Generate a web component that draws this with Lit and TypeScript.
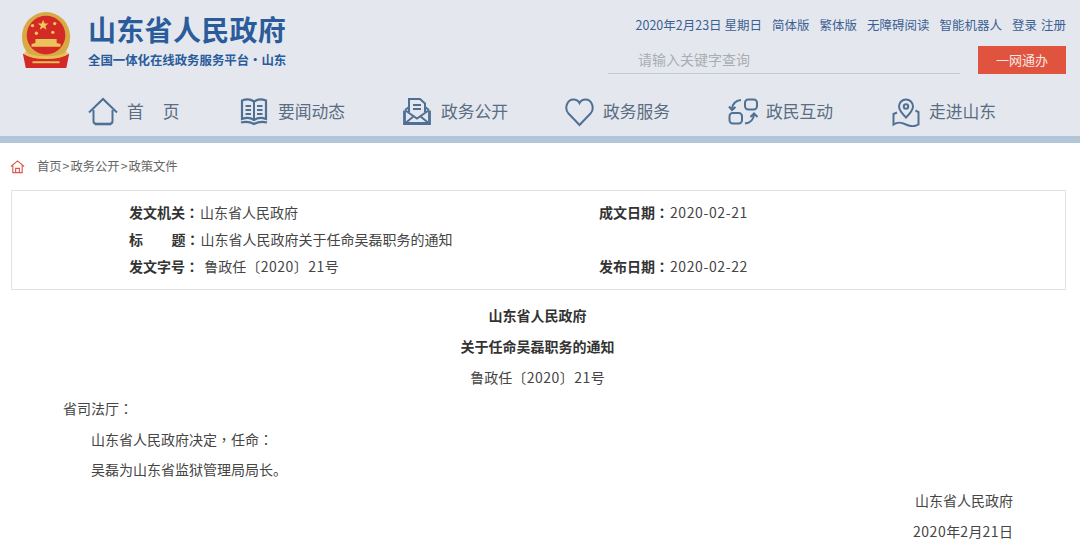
import { LitElement, html, css, svg } from "lit";
import { customElement } from "lit/decorators.js";

const icons: Record<string, unknown> = {
  home: svg`<path d="M1 15.500 15 2l14 13.500"/><path d="M5.500 13v11c0 2 1 3 3 3h13c2 0 3-1 3-3V13"/><path d="M7 27h16" stroke-width="2.600"/>`,
  book: svg`<path d="M2 3.500c4-1.500 8.500-1.500 12 1 3.500-2.500 8-2.500 12 -1v18.500c-4-1.500-8.500-1.500-12 1-3.500-2.500-8-2.500-12-1z" stroke-width="2.200"/><path d="M14 5v18M5.500 9H11M5.500 13H11M5.500 17H11M17 9h5.500M17 13h5.500M17 17h5.500"/><path d="M1 25.500c4.500-1.200 9-.8 13 1.500 4-2.300 8.500-2.700 13-1.500" stroke-width="2.200"/>`,
  mail: svg`<path d="M1.500 13.500v13h25v-13" stroke-width="2.800"/><path d="M2 13l4-3M26 13l-4-3M2.500 26l8.500-7M25.500 26 17 19M2.500 13.500 14 21.500l11.500-8"/><path d="M6 15V2h11l5 4.500V15"/><path d="M10 8h8M10 12h8"/>`,
  heart: svg`<path d="M14.500 28 3.500 16.500C-1 11.500 2 2.500 8.500 2.500c2.800 0 4.800 1.200 6 3.500 1.200-2.300 3.200-3.500 6-3.500C27 2.500 30 11.500 25.500 16.500z"/>`,
  swap: svg`<rect x="17" y="2.500" width="12" height="10" rx="3.200"/><rect x="1.500" y="16" width="12.500" height="10.500" rx="3.200"/><path d="M13 3c-5 .5-8.500 3.500-9 9M1 9.500l3 3.500 3.500-3"/><path d="M17 26.500c5-.5 8.500-3.500 9-9M22.500 20l3.500-3.500 3.500 3.500"/>`,
  map: svg`<path d="M15 20.500c-4.500-4.500-7-7.500-7-11a7 7 0 0 1 14 0c0 3.500-2.500 6.500-7 11z"/><circle cx="15" cy="9.500" r="2.200"/><path d="M6 15.500 2.500 17v10.500c4-2.800 7-2.800 12.500 0 5.500 2.500 8.500 2.500 12.500 0V15l-3-1.500"/>`,
};

const nav = [
  ["home", "首页"],
  ["book", "要闻动态"],
  ["mail", "政务公开"],
  ["heart", "政务服务"],
  ["swap", "政民互动"],
  ["map", "走进山东"],
];

const P = (s: string) => html`<span class="p">${s}</span>`;

@customElement("app-root")
export class AppRoot extends LitElement {
  static styles = css`
    :host { display: block; width: 1080px; height: 545px; overflow: hidden; background: #fff;
      font-family: "Noto Sans CJK SC", "Liberation Sans", sans-serif; color: #454545; font-size: 14px; }
    .p { font-family: "Noto Sans CJK TC", sans-serif; }
    .hdr { background: #e4e8ee; height: 136px; border-bottom: 7px solid #b2c5d9; }
    .top { display: flex; justify-content: space-between; height: 88px; }
    .brand { display: flex; padding: 12px 0 0 20px; gap: 14px; }
    .emblem { width: 54px; height: 57px; filter: blur(0.4px); }
    .title { font-size: 28px; letter-spacing: 0.300px; font-weight: 700; color: #2a5b9b; line-height: 32px; margin-top: 1px; }
    .sub { font-size: 12.400px; font-weight: 700; color: #2a5b9b; line-height: 16px; margin-top: 7px; white-space: nowrap; }
    .right { padding: 16px 14px 0 0; }
    .links { display: flex; justify-content: flex-end; gap: 10px; font-size: 12.500px; line-height: 17px; color: #3c5f94; white-space: nowrap; }
    .links .tight { margin-left: -6px; }
    .search { display: flex; justify-content: flex-end; gap: 18px; align-items: flex-start; margin-top: 13px; }
    .input { width: 352px; height: 28px; border-bottom: 1px solid #c4ccd2; padding-left: 30px; box-sizing: border-box; color: #a9adb2; font-size: 14px; line-height: 26px; }
    .btn { width: 88px; height: 28px; background: #e0533f; color: #f8e8e4; font-size: 13px; line-height: 28px; text-align: center; }
    .nav { display: flex; height: 48px; padding-left: 88px; align-items: center; }
    .item { display: flex; align-items: center; width: 163px; gap: 8px; color: #5b6d83; font-size: 16.800px; white-space: nowrap; flex: none; }
    .item:first-child { width: 152px; gap: 9px; }
    .item:nth-child(3) { width: 162px; }
    .item:first-child span { letter-spacing: 19px; }
    .item span { padding-bottom: 2px; }
    .item svg { width: 30px; height: 30px; fill: none; stroke: #4f7095; stroke-width: 2; flex: none; }
    .crumb { display: flex; align-items: center; height: 47px; padding: 0 0 1px 10px; box-sizing: border-box; font-size: 12.300px; color: #666; gap: 12px; }
    .crumb svg { width: 15px; height: 15px; fill: none; stroke: #d8584a; stroke-width: 1.200; }
    .crumb i { font-style: normal; margin: 0 1px; }
    .meta { margin: 0 14px 0 11px; height: 100px; box-sizing: border-box; border: 1px solid #e2e2e2; padding: 0 0 2px 117px; display: grid; grid-template-columns: 470px 1fr; grid-auto-rows: 27px; align-content: center; font-size: 14px; }
    .meta .c { white-space: nowrap; line-height: 27px; }
    .meta b { color: #333; font-weight: 700; margin-right: 1px; }
    .sp { display: inline-block; width: 28.500px; }
    .n { letter-spacing: 0.600px; }
    .n2 { letter-spacing: 0.500px; }
    .gap1 { margin-left: 1px; }
    .doc { font-size: 14px; line-height: 30.800px; padding-top: 10.400px; }
    .ctr { text-align: center; margin-left: -5px; }
    .ctr.b { font-weight: 700; color: #333; }
    .l0 { padding-left: 63px; }
    .l1 { padding-left: 91px; }
    .r { text-align: right; padding-right: 67px; }
  `;

  render() {
    return html`
      <div class="hdr">
        <div class="top">
          <div class="brand">
            <svg class="emblem" viewBox="0 0 54 59">
              <ellipse cx="26" cy="26" rx="25" ry="26" fill="#d9a944"/>
              <ellipse cx="26" cy="24" rx="20" ry="20" fill="#d42a25"/>
              <path d="M23 8l1.500 4h4l-3.200 2.500 1.200 4-3.500-2.500-3.500 2.500 1.200-4-3.200-2.500h4z" fill="#f0c95a"/>
              <circle cx="12" cy="14" r="1.700" fill="#f0c95a"/><circle cx="35" cy="12" r="1.700" fill="#f0c95a"/>
              <circle cx="16" cy="22" r="1.700" fill="#f0c95a"/><circle cx="33" cy="21" r="1.700" fill="#f0c95a"/>
              <path d="M11 36h30v-3l-4-1v-4H15v4l-4 1z" fill="#eac35c"/>
              <path d="M2 43c8 6 40 6 48 0l-3 15H5z" fill="#d42a25"/>
              <path d="M4 42c8 7 36 7 44 0" fill="none" stroke="#e8c05a" stroke-width="3"/>
              <path d="M12 52h28" stroke="#e8c05a" stroke-width="2"/>
            </svg>
            <div>
              <div class="title">山东省人民政府</div>
              <div class="sub">全国一体化在线政务服务平台·山东</div>
            </div>
          </div>
          <div class="right">
            <div class="links">
              <span>2020年2月23日 星期日</span><span>简体版</span><span>繁体版</span><span>无障碍阅读</span><span>智能机器人</span><span>登录</span><span class="tight">注册</span>
            </div>
            <div class="search">
              <div class="input">请输入关键字查询</div>
              <div class="btn">一网通办</div>
            </div>
          </div>
        </div>
        <div class="nav">
          ${nav.map(([k, t]) => html`<div class="item"><svg viewBox="0 0 30 30">${icons[k]}</svg><span>${t}</span></div>`)}
        </div>
      </div>
      <div class="crumb">
        <svg viewBox="0 0 16 16"><path d="M1 8 8 2l7 6M3 7v7.500h10V7M6 14.500V10h4v4.500"/></svg>
        <span>首页<i>&gt;</i>政务公开<i>&gt;</i>政策文件</span>
      </div>
      <div class="meta">
        <div class="c"><b>发文机关${P("：")}</b>山东省人民政府</div>
        <div class="c"><b>成文日期${P("：")}</b><span class="n">2020-02-21</span></div>
        <div class="c"><b>标<span class="sp"></span>题${P("：")}</b>山东省人民政府关于任命吴磊职务的通知</div>
        <div class="c"></div>
        <div class="c"><b>发文字号${P("：")}</b> <span class="gap1">鲁政任</span><span class="n2">〔2020〕21</span>号</div>
        <div class="c"><b>发布日期${P("：")}</b><span class="n">2020-02-22</span></div>
      </div>
      <div class="doc">
        <div class="ctr b">山东省人民政府</div>
        <div class="ctr b">关于任命吴磊职务的通知</div>
        <div class="ctr">鲁政任<span class="n2">〔2020〕21</span>号</div>
        <div class="l0">省司法厅${P("：")}</div>
        <div class="l1">山东省人民政府决定${P("，")}任命${P("：")}</div>
        <div class="l1">吴磊为山东省监狱管理局局长。</div>
        <div class="r">山东省人民政府</div>
        <div class="r"><span class="n2">2020</span>年<span class="n2">2</span>月<span class="n2">21</span>日</div>
      </div>
    `;
  }
}
